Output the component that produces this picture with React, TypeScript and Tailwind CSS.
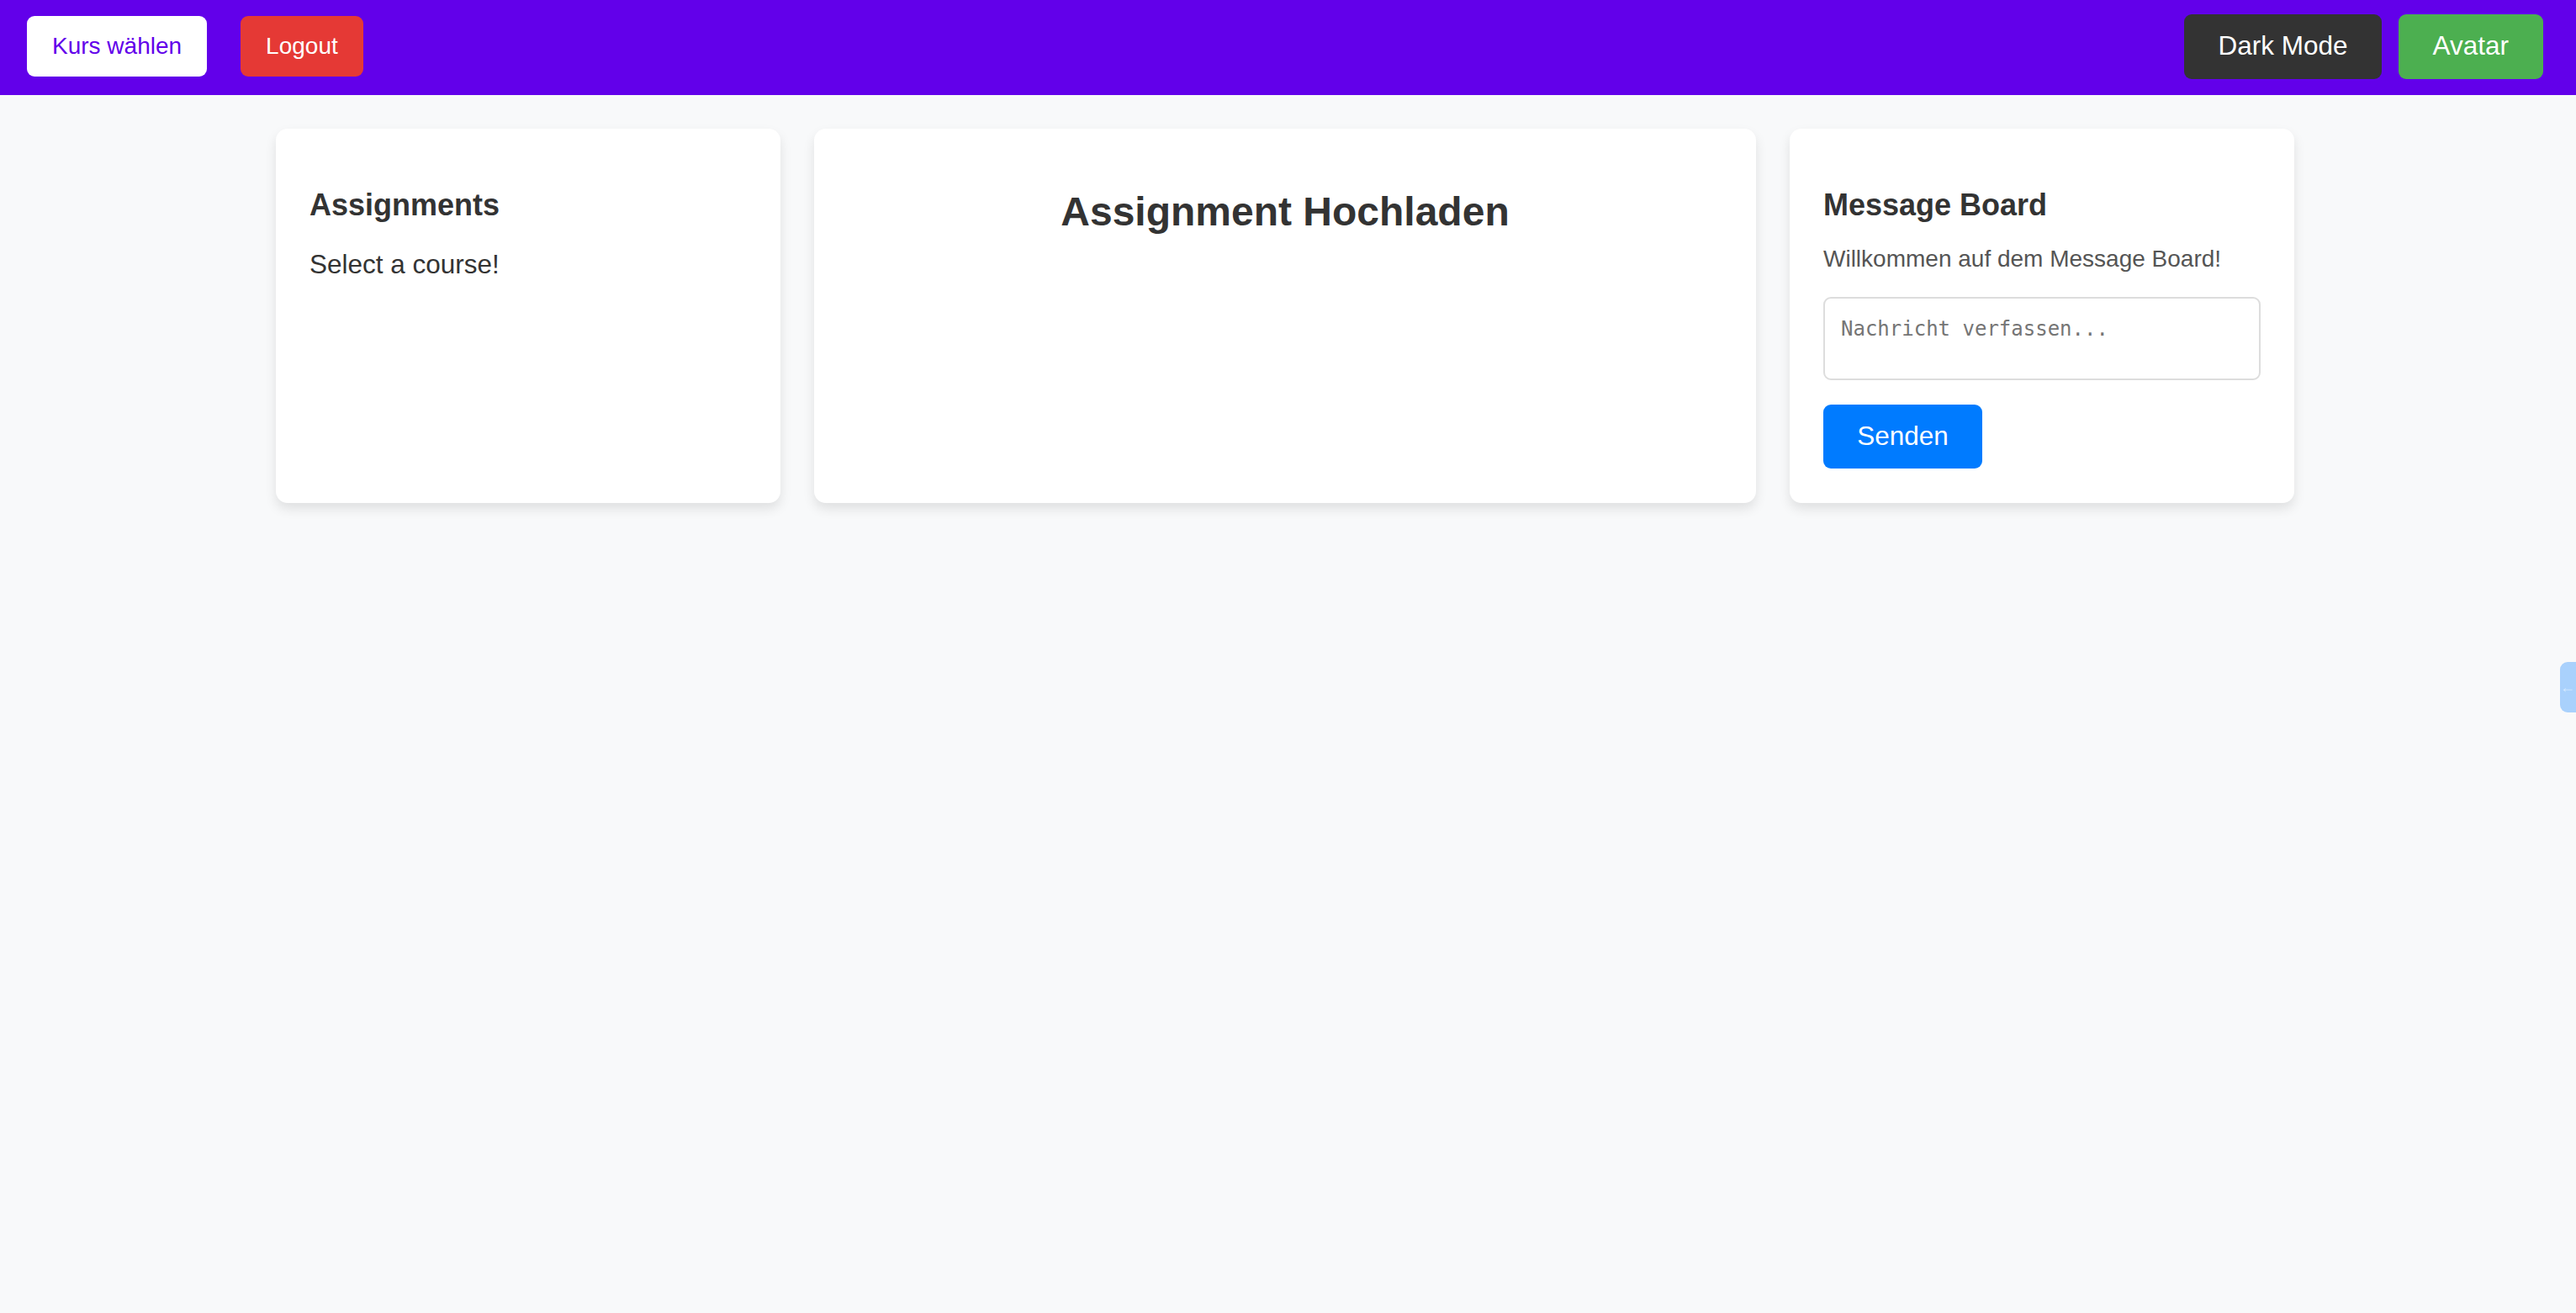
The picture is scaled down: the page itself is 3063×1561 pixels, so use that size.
import React from "react";

const Header: React.FC = () => {
    return (
        <header className="flex h-[113px] items-center justify-between bg-[#6200ea] pb-[3px] pl-[32px] pr-[39px]">
            <div className="flex items-center gap-[40px]">
                <button className="h-[72px] rounded-[9px] bg-white px-[30px] text-[28px] text-[#6200ea]">
                    Kurs wählen
                </button>
                <button className="h-[72px] rounded-[9px] bg-[#e53935] px-[30px] text-[28px] text-white">
                    Logout
                </button>
            </div>
            <div className="flex items-center gap-[20px]">
                <button className="h-[77px] rounded-[9px] bg-[#333333] px-[40px] text-[31.5px] text-white">
                    Dark Mode
                </button>
                <button className="h-[77px] rounded-[9px] bg-[#4caf50] px-[41px] text-[31.5px] text-white">
                    Avatar
                </button>
            </div>
        </header>
    );
};

const cardClass = "flex flex-col rounded-[14px] bg-white px-10 pt-10 pb-[41px] shadow-[0_7px_14px_rgba(0,0,0,0.1)]";

const App: React.FC = () => {
    return (
        <div className="min-h-screen bg-[#f8f9fa] font-['Liberation_Sans',Arial,sans-serif] text-[#333333]">
            <Header />

            <main className="flex justify-center gap-10 pt-10 pr-[7px]">
                {/* Assignments */}
                <section className={`${cardClass} w-[600px]`}>
                    <h2 className="mt-[31px] text-[36px] font-bold leading-[40px]">Assignments</h2>
                    <p className="mt-[32px] text-[31.5px] leading-[36px]">Select a course!</p>
                </section>

                {/* Upload */}
                <section className={`${cardClass} w-[1120px] items-center`}>
                    <h1 className="mt-[31px] text-[48px] font-bold leading-[56px]">Assignment Hochladen</h1>
                </section>

                {/* Message board */}
                <section className={`${cardClass} w-[600px]`}>
                    <h2 className="mt-[31px] text-[36px] font-bold leading-[40px]">Message Board</h2>
                    <p className="mt-[28px] text-[28px] leading-[32px] text-[#555555]">
                        Willkommen auf dem Message Board!
                    </p>
                    <textarea
                        placeholder="Nachricht verfassen..."
                        className="mt-[29px] h-[99px] w-full resize-none rounded-[9px] border-2 border-[#dddddd] px-[19px] pt-[22px] font-['DejaVu_Sans_Mono',monospace] text-[24px] leading-[28px] placeholder:text-[#757575] outline-none"
                    />
                    <button className="mt-[29px] h-[76px] w-[189px] rounded-[9px] bg-[#007bff] text-[31.5px] text-white">
                        Senden
                    </button>
                </section>
            </main>

            {/* sidebar toggle */}
            <button className="fixed right-0 top-[787px] flex h-[60px] w-[19px] items-center justify-end rounded-l-[9px] bg-[#a9d1fc] pr-[1px] text-[18px] leading-none text-[#d4e8fe]">
                ←
            </button>
        </div>
    );
};

export default App;
